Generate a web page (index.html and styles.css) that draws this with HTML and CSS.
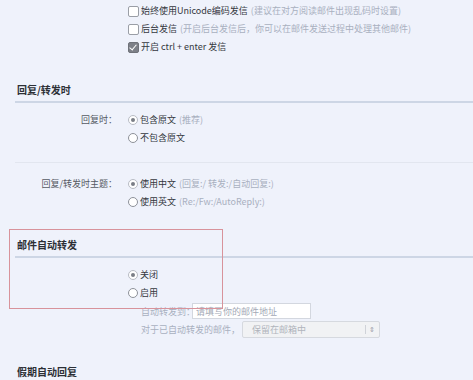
FILE: index.html
```html
<!DOCTYPE html>
<html lang="zh-CN">
<head>
    <meta charset="UTF-8">
    <title>设置 - 写信</title>
    <link rel="stylesheet" href="styles.css">
</head>
<body>
    <div class="page">
        <div class="top">
            <div class="opt"><span class="cb"></span>始终使用Unicode编码发信 <span class="hint">(建议在对方阅读邮件出现乱码时设置)</span></div>
            <div class="opt"><span class="cb"></span>后台发信 <span class="hint">(开启后台发信后，你可以在邮件发送过程中处理其他邮件)</span></div>
            <div class="opt"><span class="cb on"></span>开启 ctrl + enter 发信</div>
        </div>

        <h3 class="sec-title">回复/转发时</h3>
        <div class="field first sep">
            <div class="label">回复时：</div>
            <div class="opts">
                <div class="opt"><span class="rd on"></span>包含原文 <span class="hint">(推荐)</span></div>
                <div class="opt"><span class="rd"></span>不包含原文</div>
            </div>
        </div>
        <div class="field">
            <div class="label">回复/转发时主题：</div>
            <div class="opts">
                <div class="opt"><span class="rd on"></span>使用中文 <span class="hint">(回复:/ 转发:/自动回复:)</span></div>
                <div class="opt"><span class="rd"></span>使用英文 <span class="hint">(Re:/Fw:/AutoReply:)</span></div>
            </div>
        </div>

        <h3 class="sec-title">邮件自动转发</h3>
        <div class="field first">
            <div class="label"></div>
            <div class="opts">
                <div class="opt"><span class="rd on"></span>关闭</div>
                <div class="opt"><span class="rd"></span>启用</div>
                <div class="sub">
                    <span class="sub-label">自动转发到：</span>
                    <input class="addr" type="text" placeholder="请填写你的邮件地址" disabled>
                </div>
                <div class="sub">
                    <span class="sub-label">对于已自动转发的邮件，</span>
                    <div class="fake-select">
                        <span>保留在邮箱中</span>
                        <span class="arrow">⇕</span>
                    </div>
                </div>
            </div>
        </div>

        <h3 class="sec-title last">假期自动回复</h3>

        <!-- annotation frame drawn over the screenshot -->
        <div class="mark"></div>
    </div>
</body>
</html>
```

FILE: styles.css
```css
body {
    margin: 0;
    padding: 0;
    background-color: #eff2fb;
    font-family: "Noto Sans CJK SC", "Noto Sans", sans-serif;
    font-size: 9px;
    color: #34373e;
    overflow: hidden;
}

.page {
    position: relative;
    height: 380px;
}

.top {
    padding: 2px 0 0 128px;
}

.opt {
    display: flex;
    align-items: center;
    height: 18px;
    line-height: 18px;
    white-space: nowrap;
}

.hint {
    color: #a9b0bf;
    margin-left: 3px;
}

.cb {
    width: 9px;
    height: 9px;
    border: 1px solid #9a9ea6;
    border-radius: 2px;
    background-color: #fff;
    margin-right: 2px;
    position: relative;
}

.cb.on {
    background-color: #7d8088;
    border-color: #6f7279;
}

.cb.on::after {
    content: '';
    position: absolute;
    left: 2px;
    top: 0px;
    width: 3px;
    height: 6px;
    border: solid #fff;
    border-width: 0 1.5px 1.5px 0;
    transform: rotate(40deg);
}

.rd {
    width: 10px;
    height: 10px;
    border: 1px solid #8d9199;
    border-radius: 50%;
    background-color: #fff;
    margin-right: 2px;
    box-sizing: border-box;
    position: relative;
}

.rd.on {
    border-color: #b8bcc4;
}

.rd.on::after {
    content: '';
    position: absolute;
    left: 2px;
    top: 2px;
    width: 4px;
    height: 4px;
    border-radius: 50%;
    background-color: #7a7e86;
}

.sec-title {
    margin: 26px 0 0 15px;
    padding: 0 0 3px 2px;
    font-size: 10px;
    font-weight: bold;
    line-height: 16px;
    color: #2c2f35;
    border-bottom: 2px solid #cdd6e5;
}

.sec-title.last {
    margin-top: 26px;
    border-bottom: none;
}

.field {
    display: grid;
    grid-template-columns: 117px 1fr;
    column-gap: 11px;
    padding-top: 12px;
}

.field.first {
    padding-top: 8px;
}

.field.sep {
    margin-left: 15px;
    padding-bottom: 15px;
    grid-template-columns: 102px 1fr;
    border-bottom: 1px solid #e2e6ef;
}

.label {
    text-align: right;
    line-height: 18px;
    color: #555a63;
}

.sub {
    display: flex;
    align-items: center;
    height: 18px;
    margin-left: 13px;
    white-space: nowrap;
}

.sub:first-of-type {
    margin-top: 6px;
}

.sub-label {
    color: #a9b0bf;
}

.addr {
    width: 119px;
    height: 16px;
    box-sizing: border-box;
    margin: 0 0 0 -3px;
    padding: 0 3px;
    border: 1px solid #d3d7df;
    background-color: #fff;
    font-family: inherit;
    font-size: 9px;
}

.addr::placeholder {
    color: #a3a9b6;
}

.fake-select {
    display: flex;
    align-items: center;
    justify-content: space-between;
    width: 138px;
    height: 17px;
    box-sizing: border-box;
    margin-left: 2px;
    padding: 0 4px 0 9px;
    border: 1px solid #d6d9df;
    border-radius: 2px;
    background-color: #f1f2f4;
    color: #b0b4bc;
}

.arrow {
    border-left: 1px solid #cfd2d8;
    padding-left: 3px;
    font-size: 7px;
    line-height: 9px;
    color: #9a9ea6;
}

.mark {
    position: absolute;
    left: 9px;
    top: 229px;
    width: 212px;
    height: 78px;
    border: 1px solid #d8939b;
    pointer-events: none;
}
```
